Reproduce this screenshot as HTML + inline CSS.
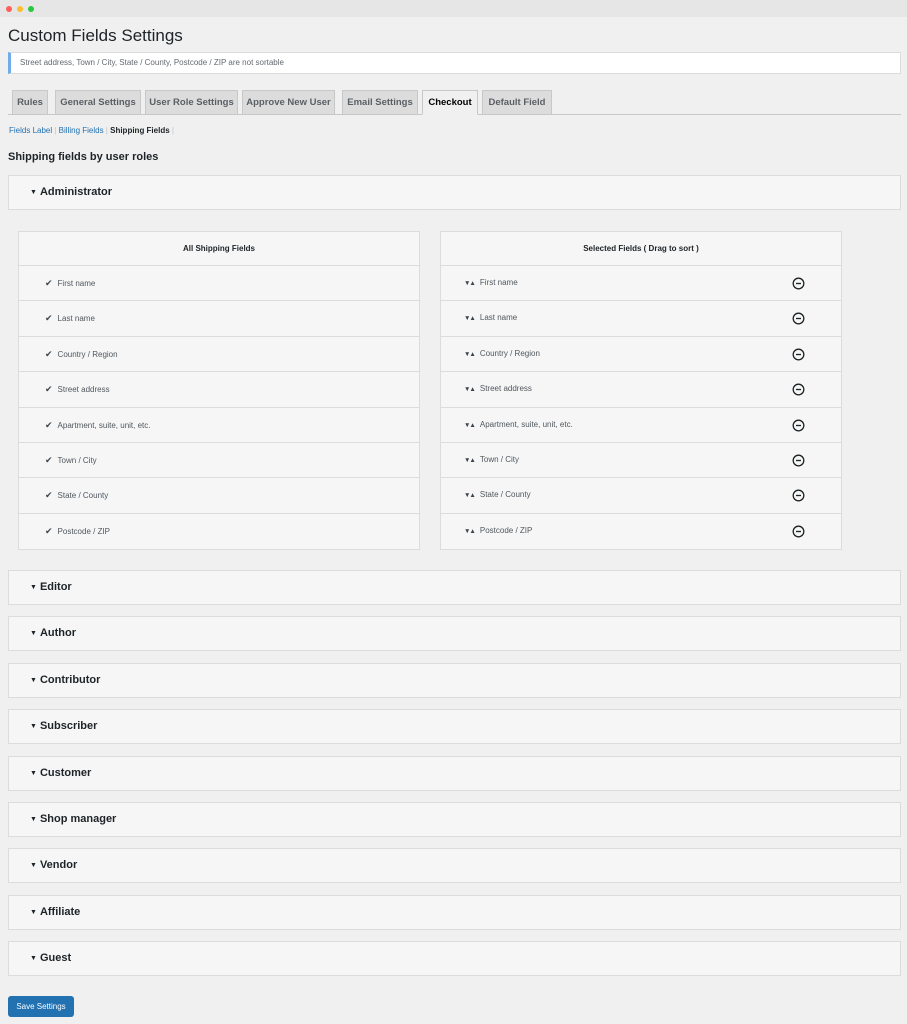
<!DOCTYPE html>
<html><head><meta charset="utf-8"><style>
*{box-sizing:border-box;margin:0;padding:0}
body{width:907px;height:1024px;background:#f0f0f0;font-family:"Liberation Sans",sans-serif;color:#1d2327;position:relative;overflow:hidden}
.abs{position:absolute}
.bar{left:0;top:0;width:907px;height:17px;background:#e6e6e6}
.dot{width:6px;height:6px;border-radius:50%;top:6px}
h1{position:absolute;left:8px;top:26px;font-size:17px;font-weight:400;color:#1d2327}
.notice{left:8px;top:52px;width:893px;height:22px;background:#fff;border:1px solid #dcdcde;border-left:3px solid #72aee6;font-size:8px;color:#646970;padding:5px 9px}
.tab{top:90px;height:25px;background:#dcdcdc;border:1px solid #c8c8c8;font-size:9.5px;font-weight:bold;color:#5a5f64;text-align:center;line-height:23px}
.tab.act{background:#f0f0f0;color:#000;border-bottom-color:#f0f0f0}
.tabline{left:8px;top:114px;width:893px;height:1px;background:#c8c8c8}
.sub{left:9px;top:126px;font-size:8px;color:#c3c4c7}
.sub a{color:#2271b1;text-decoration:none}
.sub b{color:#1d2327}
.h2{left:8px;top:151px;font-size:11px;font-weight:bold}
.panel{left:8px;width:893px;height:35px;background:#f6f6f6;border:1px solid #dcdcdc;font-size:11px;font-weight:bold;padding:10px 0 0 21px}
.panel span{font-size:7px;margin-right:3px;vertical-align:1px}
.tbl{top:231px;width:402px;background:#f6f6f6;border:1px solid #dcdcdc}
.th{height:34px;border-bottom:1px solid #dcdcdc;font-size:8px;font-weight:bold;text-align:center;line-height:33px}
.tr{height:35.4px;border-bottom:1px solid #dcdcdc;font-size:8px;color:#50575e;line-height:34px;padding-left:26px;position:relative}
.tr:last-child{border-bottom:none}
.ck{color:#3c434a;font-size:9px;margin-right:5px}
.ar{font-size:6.5px;color:#3c434a;margin-right:5px;letter-spacing:-1px}
.mn{position:absolute;right:36px;top:11px;width:13px;height:13px}
.btn{left:8px;top:996px;width:66px;height:21px;background:#2271b1;border-radius:3px;color:#fff;font-size:8px;text-align:center;line-height:21px}
</style></head><body>
<div class="abs bar"></div>
<div class="abs dot" style="left:6px;background:#ff5f57"></div>
<div class="abs dot" style="left:17px;background:#febc2e"></div>
<div class="abs dot" style="left:28px;background:#28c840"></div>
<h1>Custom Fields Settings</h1>
<div class="abs notice">Street address, Town / City, State / County, Postcode / ZIP are not sortable</div>
<div class="abs tabline"></div>
<div class="abs tab" style="left:12px;width:36px">Rules</div>
<div class="abs tab" style="left:55px;width:86px">General Settings</div>
<div class="abs tab" style="left:145px;width:93px">User Role Settings</div>
<div class="abs tab" style="left:242px;width:93px">Approve New User</div>
<div class="abs tab" style="left:342px;width:76px">Email Settings</div>
<div class="abs tab act" style="left:422px;width:56px">Checkout</div>
<div class="abs tab" style="left:482px;width:70px">Default Field</div>
<div class="abs sub"><a>Fields Label</a> | <a>Billing Fields</a> | <b>Shipping Fields</b> |</div>
<div class="abs h2">Shipping fields by user roles</div>
<div class="abs panel" style="top:175px"><span>▼</span>Administrator</div>
<div class="abs tbl" style="left:18px">
<div class="th">All Shipping Fields</div>
<div class="tr"><span class="ck">✔</span>First name</div>
<div class="tr"><span class="ck">✔</span>Last name</div>
<div class="tr"><span class="ck">✔</span>Country / Region</div>
<div class="tr"><span class="ck">✔</span>Street address</div>
<div class="tr"><span class="ck">✔</span>Apartment, suite, unit, etc.</div>
<div class="tr"><span class="ck">✔</span>Town / City</div>
<div class="tr"><span class="ck">✔</span>State / County</div>
<div class="tr"><span class="ck">✔</span>Postcode / ZIP</div>
</div>
<div class="abs tbl" style="left:440px">
<div class="th">Selected Fields ( Drag to sort )</div>
<div class="tr" style="padding-left:23px"><span class="ar">▼▲</span>First name<svg class="mn" viewBox="0 0 13 13"><circle cx="6.5" cy="6.5" r="5.3" fill="none" stroke="#1d2327" stroke-width="1.3"/><path d="M4 6.5h5" stroke="#1d2327" stroke-width="1.3"/></svg></div>
<div class="tr" style="padding-left:23px"><span class="ar">▼▲</span>Last name<svg class="mn" viewBox="0 0 13 13"><circle cx="6.5" cy="6.5" r="5.3" fill="none" stroke="#1d2327" stroke-width="1.3"/><path d="M4 6.5h5" stroke="#1d2327" stroke-width="1.3"/></svg></div>
<div class="tr" style="padding-left:23px"><span class="ar">▼▲</span>Country / Region<svg class="mn" viewBox="0 0 13 13"><circle cx="6.5" cy="6.5" r="5.3" fill="none" stroke="#1d2327" stroke-width="1.3"/><path d="M4 6.5h5" stroke="#1d2327" stroke-width="1.3"/></svg></div>
<div class="tr" style="padding-left:23px"><span class="ar">▼▲</span>Street address<svg class="mn" viewBox="0 0 13 13"><circle cx="6.5" cy="6.5" r="5.3" fill="none" stroke="#1d2327" stroke-width="1.3"/><path d="M4 6.5h5" stroke="#1d2327" stroke-width="1.3"/></svg></div>
<div class="tr" style="padding-left:23px"><span class="ar">▼▲</span>Apartment, suite, unit, etc.<svg class="mn" viewBox="0 0 13 13"><circle cx="6.5" cy="6.5" r="5.3" fill="none" stroke="#1d2327" stroke-width="1.3"/><path d="M4 6.5h5" stroke="#1d2327" stroke-width="1.3"/></svg></div>
<div class="tr" style="padding-left:23px"><span class="ar">▼▲</span>Town / City<svg class="mn" viewBox="0 0 13 13"><circle cx="6.5" cy="6.5" r="5.3" fill="none" stroke="#1d2327" stroke-width="1.3"/><path d="M4 6.5h5" stroke="#1d2327" stroke-width="1.3"/></svg></div>
<div class="tr" style="padding-left:23px"><span class="ar">▼▲</span>State / County<svg class="mn" viewBox="0 0 13 13"><circle cx="6.5" cy="6.5" r="5.3" fill="none" stroke="#1d2327" stroke-width="1.3"/><path d="M4 6.5h5" stroke="#1d2327" stroke-width="1.3"/></svg></div>
<div class="tr" style="padding-left:23px"><span class="ar">▼▲</span>Postcode / ZIP<svg class="mn" viewBox="0 0 13 13"><circle cx="6.5" cy="6.5" r="5.3" fill="none" stroke="#1d2327" stroke-width="1.3"/><path d="M4 6.5h5" stroke="#1d2327" stroke-width="1.3"/></svg></div>
</div>
<div class="abs panel" style="top:570px"><span>▼</span>Editor</div>
<div class="abs panel" style="top:616px"><span>▼</span>Author</div>
<div class="abs panel" style="top:663px"><span>▼</span>Contributor</div>
<div class="abs panel" style="top:709px"><span>▼</span>Subscriber</div>
<div class="abs panel" style="top:756px"><span>▼</span>Customer</div>
<div class="abs panel" style="top:802px"><span>▼</span>Shop manager</div>
<div class="abs panel" style="top:848px"><span>▼</span>Vendor</div>
<div class="abs panel" style="top:895px"><span>▼</span>Affiliate</div>
<div class="abs panel" style="top:941px"><span>▼</span>Guest</div>
<div class="abs btn">Save Settings</div>
</body></html>
